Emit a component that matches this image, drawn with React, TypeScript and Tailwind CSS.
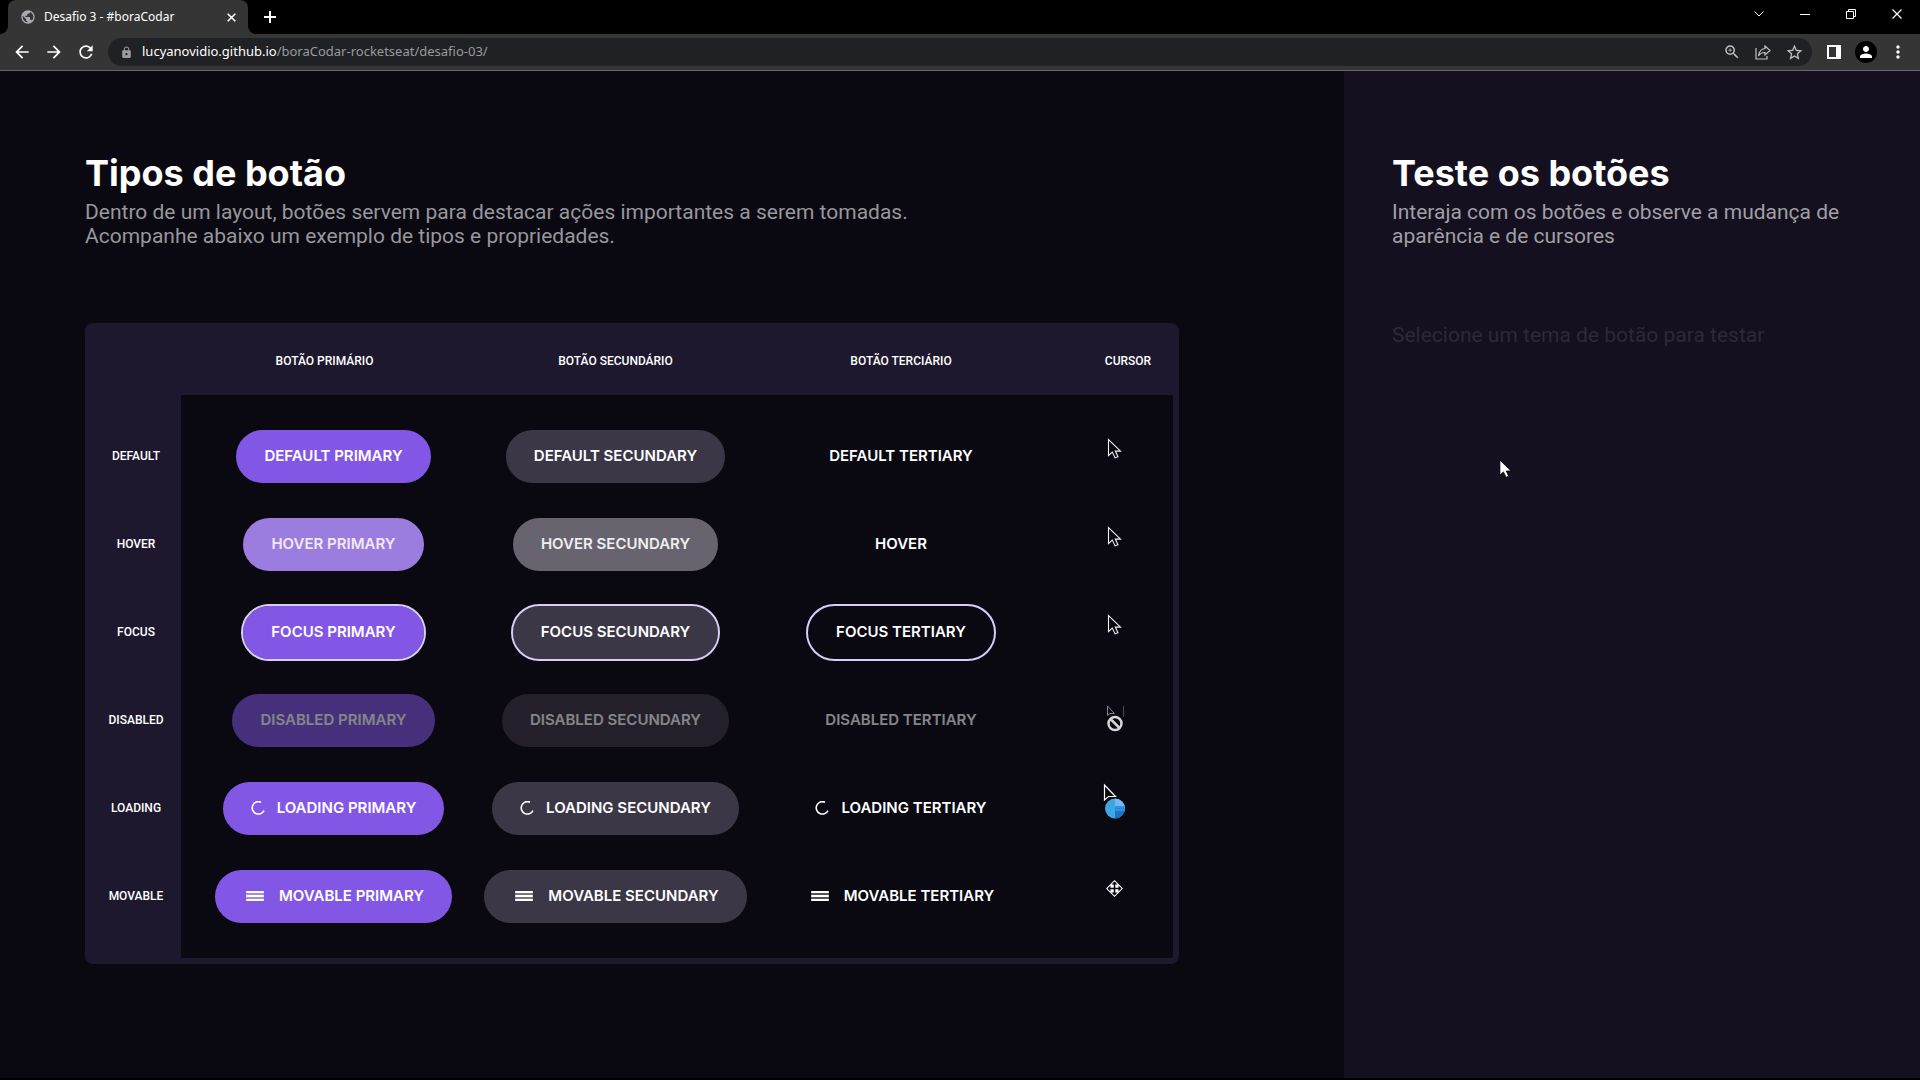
import React from "react";
import {
  MdArrowBack,
  MdArrowForward,
  MdRefresh,
  MdLock,
  MdStarBorder,
  MdZoomIn,
  MdMoreVert,
  MdPerson,
  MdPublic,
} from "react-icons/md";

type Variant = "primary" | "secondary" | "tertiary";
type State = "default" | "hover" | "focus" | "disabled" | "loading" | "movable";

const fills: Record<Variant, string> = {
  primary: "bg-[#8257e5] text-white",
  secondary: "bg-[#3c3746] text-white",
  tertiary: "bg-transparent text-white",
};

const hoverFills: Record<Variant, string> = {
  primary: "bg-[#9b7ddf] text-[#efe9fa]",
  secondary: "bg-[#68646f] text-[#efeef0]",
  tertiary: "bg-transparent text-white",
};

const states: Record<State, string> = {
  default: "",
  hover: "",
  focus: "outline-2 outline-[#d9cdf7]",
  disabled: "opacity-50",
  loading: "",
  movable: "",
};

function Spinner() {
  return (
    <svg width="14" height="14" viewBox="0 0 14 14" fill="none" stroke="currentColor" strokeWidth="1.6" aria-hidden="true">
      <path d="M10 1.200A6.200 6.200 0 1 0 13 9.600" />
    </svg>
  );
}

function Bars() {
  return (
    <svg width="24" height="14" viewBox="0 0 24 14" fill="currentColor" aria-hidden="true">
      <rect x="3" y="2" width="18" height="10" opacity="0.3" />
      <rect x="3" y="2" width="18" height="2" rx="1" />
      <rect x="3" y="6" width="18" height="2" rx="1" />
      <rect x="3" y="10" width="18" height="2" rx="1" />
    </svg>
  );
}

function ThemeButton({ variant, state, label }: { variant: Variant; state: State; label: string }) {
  const fill = state === "hover" ? hoverFills[variant] : fills[variant];
  return (
    <button
      type="button"
      disabled={state === "disabled"}
      className={`inline-flex h-[53px] items-center gap-3 rounded-full px-7 font-[Inter,sans-serif] text-[15px] font-semibold whitespace-nowrap ${fill} ${states[state]}`}
    >
      {state === "loading" && <Spinner />}
      {state === "movable" && <Bars />}
      {label}
    </button>
  );
}

const arrow = "M0 0V16L3.8 12.6L6.6 18.4L9.4 17.2L6.8 11.6H12Z";

function CursorPicture({ state }: { state: State }) {
  return (
    <svg width="32" height="56" viewBox="0 0 32 56" className="mx-auto block" role="img" aria-label={`${state} cursor`}>
      {(state === "default" || state === "hover" || state === "focus") && (
        <path d={arrow} transform="translate(9.5 11.5)" fill="#0a0911" stroke="#f2f2f2" strokeWidth="1.1" />
      )}
      {state === "disabled" && (
        <g fill="none">
          <path d="M8.5 14V23.500L11 21.500H15.500Z" stroke="#86848a" />
          <path d="M24.500 14V25" stroke="#4a4850" />
          <circle cx="16" cy="31.500" r="6.500" fill="#0a0911" stroke="#d6d6d6" strokeWidth="2.500" />
          <path d="M11.500 27L20.500 36" stroke="#d6d6d6" strokeWidth="2.500" />
        </g>
      )}
      {state === "loading" && (
        <g transform="translate(0 1)">
          <path d="M5.500 4V19L9.500 15.500H16.500Z" fill="#0a0911" stroke="#ffffff" strokeWidth="1.200" />
          <circle cx="16" cy="27.500" r="10" fill="#3ea6e3" />
          <path d="M16 27.500V17.500A10 10 0 0 1 26 27.500Z" fill="#74b8f5" />
          <path d="M16 27.500H26A10 10 0 0 1 16 37.500Z" fill="#2170c4" />
          <path d="M16 25H25.800V30H16Z" fill="#2f95dc" />
          <path d="M16 27.500H26" stroke="#1f78c8" strokeDasharray="1 1" />
        </g>
      )}
      {state === "movable" && (
        <g>
          <path d="M15.500 12L24 20.500L15.500 29L7 20.500Z" fill="#ffffff" />
          <path d="M15.500 14V27M9 20.500H22" stroke="#0a0911" strokeWidth="1.500" />
          <path d="M12.500 16.500H18.500L15.500 13.500ZM12.500 24.500H18.500L15.500 27.500ZM11.500 17.500V23.500L8.500 20.500ZM19.500 17.500V23.500L22.500 20.500Z" fill="#0a0911" />
        </g>
      )}
    </svg>
  );
}

const rows: { state: State; title: string; labels: [string, string, string] }[] = [
  { state: "default", title: "DEFAULT", labels: ["DEFAULT PRIMARY", "DEFAULT SECUNDARY", "DEFAULT TERTIARY"] },
  { state: "hover", title: "HOVER", labels: ["HOVER PRIMARY", "HOVER SECUNDARY", "HOVER"] },
  { state: "focus", title: "FOCUS", labels: ["FOCUS PRIMARY", "FOCUS SECUNDARY", "FOCUS TERTIARY"] },
  { state: "disabled", title: "DISABLED", labels: ["DISABLED PRIMARY", "DISABLED SECUNDARY", "DISABLED TERTIARY"] },
  { state: "loading", title: "LOADING", labels: ["LOADING PRIMARY", "LOADING SECUNDARY", "LOADING TERTIARY"] },
  { state: "movable", title: "MOVABLE", labels: ["MOVABLE PRIMARY", "MOVABLE SECUNDARY", "MOVABLE TERTIARY"] },
];

const variants: Variant[] = ["primary", "secondary", "tertiary"];

function ButtonsTable() {
  return (
    <div className="overflow-hidden rounded-lg border-r-6 border-b-6 border-[#1e182e] bg-[#1e182e]">
      <table className="w-full table-fixed border-collapse text-center text-xs text-white">
        <colgroup>
          <col className="w-[96px]" />
          <col className="w-[305px]" />
          <col className="w-[259px]" />
          <col className="w-[312px]" />
          <col className="w-[116px]" />
        </colgroup>
        <thead>
          <tr className="h-[72px]">
            <td />
            <th scope="col" className="pt-[3px] pr-[18px] font-medium">BOTÃO PRIMÁRIO</th>
            <th scope="col" className="pt-[3px] font-medium">BOTÃO SECUNDÁRIO</th>
            <th scope="col" className="pt-[3px] font-medium">BOTÃO TERCIÁRIO</th>
            <th scope="col" className="pt-[3px] pl-[26px] font-medium">CURSOR</th>
          </tr>
        </thead>
        <tbody>
          {rows.map((row, i) => {
            const pad = i === 0 ? "h-[105px] pt-[17px]" : i === rows.length - 1 ? "h-[106px] pb-[18px]" : "h-[88px]";
            return (
              <tr key={row.state}>
                <th scope="row" className={`pl-[6px] font-medium ${pad}`}>{row.title}</th>
                {variants.map((variant, v) => (
                  <td key={variant} className={`bg-[#0a0911] align-middle ${pad}`}>
                    <div className="flex justify-center">
                      <ThemeButton variant={variant} state={row.state} label={row.labels[v]} />
                    </div>
                  </td>
                ))}
                <td className={`bg-[#0a0911] ${pad}`}>
                  <CursorPicture state={row.state} />
                </td>
              </tr>
            );
          })}
        </tbody>
      </table>
    </div>
  );
}

function Browser() {
  return (
    <header className="font-['Noto_Sans',sans-serif] text-white">
      <div className="flex h-[34px] items-stretch bg-black pl-2">
        <div className="relative flex w-[240px] items-center rounded-t-lg bg-[#353535] pr-3 pl-3">
          <svg width="8" height="8" className="absolute bottom-0 -left-2" aria-hidden="true">
            <path d="M8 0V8H0A8 8 0 0 0 8 0Z" fill="#353535" />
          </svg>
          <svg width="8" height="8" className="absolute -right-2 bottom-0" aria-hidden="true">
            <path d="M0 0V8H8A8 8 0 0 1 0 0Z" fill="#353535" />
          </svg>
          <MdPublic className="size-4 text-[#a9a9b0]" />
          <span className="ml-2 flex-1 text-xs">Desafio 3 - #boraCodar</span>
          <button type="button" aria-label="Fechar guia">
            <svg width="9" height="9" viewBox="0 0 9 9" stroke="currentColor" strokeWidth="1.600">
              <path d="M0.700 0.700L8.300 8.300M8.300 0.700L0.700 8.300" />
            </svg>
          </button>
        </div>
        <button type="button" aria-label="Nova guia" className="ml-4 flex items-center">
          <svg width="12" height="12" viewBox="0 0 12 12" stroke="currentColor" strokeWidth="2">
            <path d="M6 0V12M0 6H12" />
          </svg>
        </button>
        <div className="ml-auto flex h-7 [&>button]:flex [&>button]:w-[46px] [&>button]:items-center [&>button]:justify-center">
          <button type="button" aria-label="Pesquisar guias">
            <svg width="10" height="6" viewBox="0 0 10 6" fill="none" stroke="#ffffff">
              <path d="M0.500 0.500L5 5L9.500 0.500" />
            </svg>
          </button>
          <button type="button" aria-label="Minimizar">
            <span className="h-px w-[10px] bg-white" />
          </button>
          <button type="button" aria-label="Restaurar">
            <svg width="10" height="10" viewBox="0 0 10 10" fill="none" stroke="currentColor">
              <path d="M0.500 2.500H7.500V9.500H0.500ZM2.500 2.500V0.500H9.500V7.500H7.500" />
            </svg>
          </button>
          <button type="button" aria-label="Fechar">
            <svg width="10" height="10" viewBox="0 0 10 10" stroke="currentColor" strokeWidth="1.200">
              <path d="M0.500 0.500L9.500 9.500M9.500 0.500L0.500 9.500" />
            </svg>
          </button>
        </div>
      </div>
      <div className="flex h-[37px] items-center border-b border-[#68686a] bg-[#353535] pr-3">
        <div className="flex w-[108px] gap-3 pl-3 [&_svg]:size-5">
          <button type="button" aria-label="Voltar"><MdArrowBack /></button>
          <button type="button" aria-label="Avançar"><MdArrowForward /></button>
          <button type="button" aria-label="Recarregar"><MdRefresh /></button>
        </div>
        <div className="flex h-7 flex-1 items-center rounded-full bg-[#202124] pr-2 pl-3 text-[13px] text-[#9a9aa0]">
          <MdLock className="size-[13px]" />
          <a href="#" className="ml-[9px]">
            <span className="text-white">lucyanovidio.github.io</span>/boraCodar-rocketseat/desafio-03/
          </a>
          <div className="ml-auto flex gap-3 text-[#c0c0c4]">
            <button type="button" aria-label="Zoom">
              <MdZoomIn className="size-[18px]" />
            </button>
            <button type="button" aria-label="Compartilhar" className="flex size-5 items-center justify-center">
              <svg width="16" height="15" viewBox="0 0 16 15" fill="none" stroke="currentColor" strokeWidth="1.200">
                <path d="M1 3V14H12V11" />
                <path d="M10 1L15 5.500L10 10V7.500C7 7.300 5 8.500 3.500 11C4 7 6 4 10 3.500Z" />
              </svg>
            </button>
            <button type="button" aria-label="Favoritos"><MdStarBorder className="size-[19px]" /></button>
          </div>
        </div>
        <div className="ml-[15px] flex items-center">
          <button type="button" aria-label="Painel lateral">
            <svg width="14" height="14" viewBox="0 0 14 14" className="block">
              <path d="M0 0H14V14H0ZM2 2V12H9V2Z" fill="currentColor" fillRule="evenodd" />
            </svg>
          </button>
          <button type="button" aria-label="Perfil" className="ml-[14px] flex size-[22px] items-center justify-center rounded-full bg-black">
            <MdPerson className="size-[18px]" />
          </button>
          <button type="button" aria-label="Mais" className="ml-[11px]">
            <MdMoreVert className="size-5" />
          </button>
        </div>
      </div>
    </header>
  );
}

export default function App() {
  return (
    <div className="flex min-h-screen flex-col border-b-2 border-black bg-[#0a0911] font-[Roboto,sans-serif]">
      <Browser />
      <div className="relative flex flex-1">
        <main className="w-[70%] pt-[78px] pr-[165px] pl-[85px]">
          <h1 className="font-[Inter,sans-serif] text-4xl leading-[48px] font-bold text-white">Tipos de botão</h1>
          <p className="mt-[3px] text-[21px] leading-6 text-[#98979c]">
            Dentro de um layout, botões servem para destacar ações importantes a serem tomadas.
            <br />
            Acompanhe abaixo um exemplo de tipos e propriedades.
          </p>
          <section className="mt-[75px]">
            <ButtonsTable />
          </section>
        </main>
        <aside className="w-[30%] bg-[#14101f] px-12 pt-[78px]">
          <h2 className="font-[Inter,sans-serif] text-4xl leading-[48px] font-bold text-white">Teste os botões</h2>
          <p className="mt-[3px] text-[21px] leading-6 text-[#a09fa4]">
            Interaja com os botões e observe a mudança de aparência e de cursores
          </p>
          <p className="mt-[75px] text-[21px] leading-6 text-[#2d2937]">Selecione um tema de botão para testar</p>
        </aside>
        <svg width="13" height="20" viewBox="-1 -1 14 21" className="pointer-events-none absolute top-[388px] left-[1499px]" aria-hidden="true">
          <path d={arrow} fill="#ffffff" stroke="#000000" strokeWidth="0.800" />
        </svg>
      </div>
    </div>
  );
}
